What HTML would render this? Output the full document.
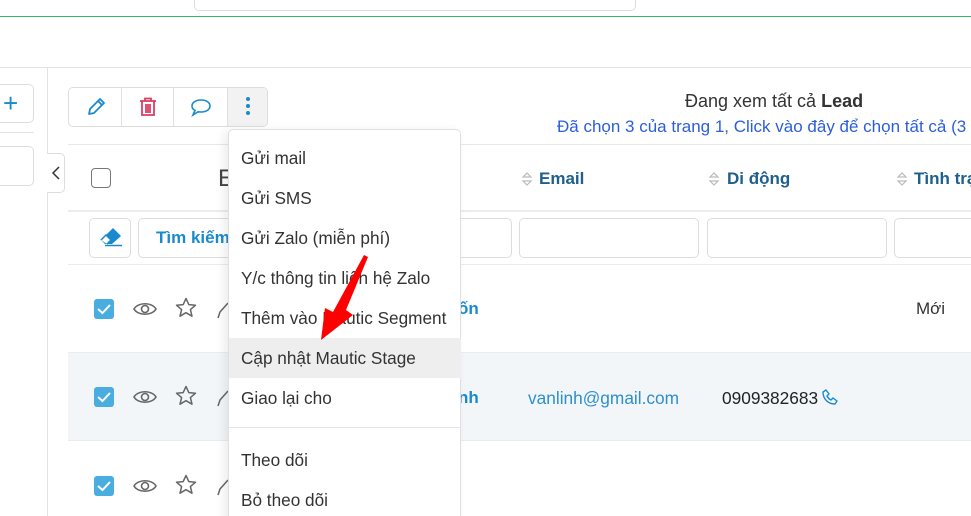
<!DOCTYPE html>
<html><head><meta charset="utf-8"><style>
*{box-sizing:border-box;margin:0;padding:0}
html,body{width:971px;height:516px;overflow:hidden}
body{background:#fff;font-family:"Liberation Sans","DejaVu Sans",sans-serif;position:relative;color:#333}
.a{position:absolute}
.t{position:absolute;white-space:nowrap;font-size:17px;line-height:20px}
.box{position:absolute;border:1px solid #ddd;border-radius:5px;background:#fff}
.mi{position:absolute;left:0;width:232px;height:40px;padding-left:12px;font-size:17.2px;line-height:40px;color:#333;white-space:nowrap}
</style></head><body>
<div class="box" style="left:194px;top:-10px;width:442px;height:21px"></div>
<div class="a" style="left:0;top:16px;width:971px;height:1px;background:#2fba6a"></div>
<div class="a" style="left:0;top:67px;width:971px;height:1px;background:#e3e3e3"></div>
<div class="a" style="left:47px;top:68px;width:1px;height:448px;background:#e3e3e3"></div>
<div class="box" style="left:-10px;top:84px;width:44px;height:39px"></div>
<div class="t" style="left:3px;top:90px;font-size:26px;line-height:26px;color:#1a8ad0">+</div>
<div class="a" style="left:0;top:132px;width:34px;height:1px;background:#e3e3e3"></div>
<div class="box" style="left:-10px;top:146px;width:44px;height:40px"></div>
<div class="box" style="left:47px;top:153px;width:18px;height:40px;border-radius:0 5px 5px 0;border-left:none"></div>
<svg class="a" style="left:50px;top:165px" width="12" height="16"><path d="M9 2 L3 8 L9 14" fill="none" stroke="#333" stroke-width="1.5"/></svg>
<div class="box" style="left:68px;top:87px;width:200px;height:40px"></div>
<div class="a" style="left:228px;top:88px;width:39px;height:38px;background:#f2f2f2;border-radius:0 5px 5px 0"></div>
<div class="a" style="left:121px;top:88px;width:1px;height:38px;background:#e0e0e0"></div>
<div class="a" style="left:173px;top:88px;width:1px;height:38px;background:#e0e0e0"></div>
<div class="a" style="left:227px;top:88px;width:1px;height:38px;background:#e0e0e0"></div>
<svg class="a" style="left:86px;top:97px" width="20" height="20"><path d="M3 17 L4 12 L14 2 L18 6 L8 16 Z M12 4 L16 8" fill="none" stroke="#1a8ad0" stroke-width="1.8" stroke-linejoin="round"/></svg>
<svg class="a" style="left:139px;top:97px" width="18" height="20"><path d="M1 4 H17 M6 4 V1.5 H12 V4 M3 4 V18 H15 V4 M7 7 V16 M9 7 V16 M11 7 V16" fill="none" stroke="#dc3d63" stroke-width="1.8"/></svg>
<svg class="a" style="left:190px;top:98px" width="22" height="19"><path d="M11 2 C5 2 2 5 2 8 C2 10 3 11.5 5 12.5 L3 17 L8 13.8 C9 14 10 14 11 14 C17 14 20 11 20 8 C20 5 17 2 11 2 Z" fill="none" stroke="#1a8ad0" stroke-width="1.6"/></svg>
<div class="a" style="left:246px;top:97px;width:4px;height:4px;border-radius:2px;background:#1a8ad0"></div>
<div class="a" style="left:246px;top:104px;width:4px;height:4px;border-radius:2px;background:#1a8ad0"></div>
<div class="a" style="left:246px;top:111px;width:4px;height:4px;border-radius:2px;background:#1a8ad0"></div>
<div class="t" style="left:685px;top:91px;font-size:18px;color:#333">Đang xem tất cả <b>Lead</b></div>
<div class="t" style="left:557px;top:117px;font-size:17px;color:#2b5fd9">Đã chọn 3 của trang 1, Click vào đây để chọn tất cả (3</div>
<div class="a" style="left:68px;top:144px;width:903px;height:1px;background:#e8e8e8"></div>
<div class="a" style="left:91px;top:168px;width:20px;height:20px;border:1.5px solid #777;border-radius:4px"></div>
<div class="t" style="left:218px;top:166px;font-size:24px;line-height:26px;color:#444">E</div>
<svg class="a" style="left:521px;top:171px" width="12" height="16"><path d="M2 6 L6 2 L10 6 Z M2 10 L6 14 L10 10 Z" fill="none" stroke="#bbb" stroke-width="1.2"/></svg>
<div class="t" style="left:539px;top:169px;font-weight:bold;color:#1f5f8b">Email</div>
<svg class="a" style="left:708px;top:171px" width="12" height="16"><path d="M2 6 L6 2 L10 6 Z M2 10 L6 14 L10 10 Z" fill="none" stroke="#bbb" stroke-width="1.2"/></svg>
<div class="t" style="left:727px;top:169px;font-weight:bold;color:#1f5f8b">Di động</div>
<svg class="a" style="left:896px;top:171px" width="12" height="16"><path d="M2 6 L6 2 L10 6 Z M2 10 L6 14 L10 10 Z" fill="none" stroke="#bbb" stroke-width="1.2"/></svg>
<div class="t" style="left:914px;top:169px;font-weight:bold;color:#1f5f8b">Tình trạ</div>
<div class="a" style="left:68px;top:210px;width:903px;height:2px;background:#ececec"></div>
<div class="box" style="left:89px;top:218px;width:42px;height:40px"></div>
<svg class="a" style="left:99px;top:227px" width="24" height="20"><path d="M14 1 L22 9 L13 17 L6 17 L2 13 Z" fill="#1a8ad0"/><path d="M2 13 L7 8 L12 13 L8 17" fill="#fff" stroke="#1a8ad0" stroke-width="1.5"/><path d="M6 18.5 H23" stroke="#1a8ad0" stroke-width="1.5"/></svg>
<div class="box" style="left:138px;top:218px;width:110px;height:40px"></div>
<div class="t" style="left:156px;top:228px;font-size:17px;font-weight:bold;color:#1a8ad0">Tìm kiếm</div>
<div class="box" style="left:440px;top:218px;width:72px;height:40px"></div>
<div class="box" style="left:519px;top:218px;width:180px;height:40px"></div>
<div class="box" style="left:707px;top:218px;width:180px;height:40px"></div>
<div class="box" style="left:894px;top:218px;width:90px;height:40px"></div>
<div class="a" style="left:68px;top:264px;width:903px;height:1px;background:#ececec"></div>
<div class="a" style="left:68px;top:352px;width:903px;height:89px;background:#f3f6f9;border-top:1px solid #ececec;border-bottom:1px solid #ececec"></div>
<div class="t" style="left:458px;top:299px;font-weight:bold;color:#1a8ad0">ốn</div>
<div class="t" style="left:916px;top:299px;color:#333">Mới</div>
<div class="t" style="left:458px;top:388px;font-weight:bold;color:#1a8ad0">nh</div>
<div class="t" style="left:528px;top:388px;font-size:17.3px;color:#2d8fcf">vanlinh@gmail.com</div>
<div class="t" style="left:722px;top:388px;font-size:17.3px;color:#222">0909382683</div>
<svg class="a" style="left:821px;top:389px" width="17" height="17"><path d="M2 3 L5 1 L8 5 L6 7 C7 9 8 10 10 11 L12 9 L16 12 L14 15 C7 15 2 10 2 3 Z" fill="none" stroke="#1a8ad0" stroke-width="1.4" stroke-linejoin="round"/></svg>
<svg class="a" style="left:94px;top:299px" width="20" height="20"><rect width="20" height="20" rx="3" fill="#4aaddf"/><path d="M4 10 L8.5 14 L16 6" fill="none" stroke="#fff" stroke-width="2"/></svg>
<svg class="a" style="left:94px;top:387px" width="20" height="20"><rect width="20" height="20" rx="3" fill="#4aaddf"/><path d="M4 10 L8.5 14 L16 6" fill="none" stroke="#fff" stroke-width="2"/></svg>
<svg class="a" style="left:94px;top:476px" width="20" height="20"><rect width="20" height="20" rx="3" fill="#4aaddf"/><path d="M4 10 L8.5 14 L16 6" fill="none" stroke="#fff" stroke-width="2"/></svg>
<svg class="a" style="left:133px;top:300px" width="24" height="18"><path d="M1 9 C5 2 19 2 23 9 C19 16 5 16 1 9 Z" fill="none" stroke="#666" stroke-width="1.6"/><circle cx="12" cy="9" r="3.5" fill="none" stroke="#666" stroke-width="1.6"/></svg>
<svg class="a" style="left:133px;top:388px" width="24" height="18"><path d="M1 9 C5 2 19 2 23 9 C19 16 5 16 1 9 Z" fill="none" stroke="#666" stroke-width="1.6"/><circle cx="12" cy="9" r="3.5" fill="none" stroke="#666" stroke-width="1.6"/></svg>
<svg class="a" style="left:133px;top:477px" width="24" height="18"><path d="M1 9 C5 2 19 2 23 9 C19 16 5 16 1 9 Z" fill="none" stroke="#666" stroke-width="1.6"/><circle cx="12" cy="9" r="3.5" fill="none" stroke="#666" stroke-width="1.6"/></svg>
<svg class="a" style="left:175px;top:297px" width="22" height="22"><path d="M11 1.5 L13.8 7.6 L20.5 8.2 L15.4 12.6 L17 19.2 L11 15.7 L5 19.2 L6.6 12.6 L1.5 8.2 L8.2 7.6 Z" fill="none" stroke="#666" stroke-width="1.5" stroke-linejoin="round"/></svg>
<svg class="a" style="left:175px;top:385px" width="22" height="22"><path d="M11 1.5 L13.8 7.6 L20.5 8.2 L15.4 12.6 L17 19.2 L11 15.7 L5 19.2 L6.6 12.6 L1.5 8.2 L8.2 7.6 Z" fill="none" stroke="#666" stroke-width="1.5" stroke-linejoin="round"/></svg>
<svg class="a" style="left:175px;top:474px" width="22" height="22"><path d="M11 1.5 L13.8 7.6 L20.5 8.2 L15.4 12.6 L17 19.2 L11 15.7 L5 19.2 L6.6 12.6 L1.5 8.2 L8.2 7.6 Z" fill="none" stroke="#666" stroke-width="1.5" stroke-linejoin="round"/></svg>
<svg class="a" style="left:216px;top:300px" width="14" height="20"><path d="M2 18 L4 12 L12 3" fill="none" stroke="#666" stroke-width="1.5"/></svg>
<svg class="a" style="left:216px;top:388px" width="14" height="20"><path d="M2 18 L4 12 L12 3" fill="none" stroke="#666" stroke-width="1.5"/></svg>
<svg class="a" style="left:216px;top:477px" width="14" height="20"><path d="M2 18 L4 12 L12 3" fill="none" stroke="#666" stroke-width="1.5"/></svg>
<div class="a" style="left:228px;top:129px;width:233px;height:400px;background:#fff;border:1px solid #e0e0e0;border-radius:5px;box-shadow:-4px 2px 10px rgba(0,0,0,0.08)">
<div class="mi" style="top:8px">Gửi mail</div>
<div class="mi" style="top:48px">Gửi SMS</div>
<div class="mi" style="top:88px">Gửi Zalo (miễn phí)</div>
<div class="mi" style="top:128px">Y/c thông tin liên hệ Zalo</div>
<div class="mi" style="top:168px">Thêm vào Mautic Segment</div>
<div class="mi" style="top:208px;background:#eee">Cập nhật Mautic Stage</div>
<div class="mi" style="top:248px">Giao lại cho</div>
<div class="a" style="left:0;top:297px;width:232px;height:1px;background:#e6e6e6"></div>
<div class="mi" style="top:310px">Theo dõi</div>
<div class="mi" style="top:350px">Bỏ theo dõi</div>
</div>
<svg class="a" style="left:300px;top:250px" width="80" height="100"><path d="M68 7 L46 60 L53 65 L21 90 L25 58 L33 62 L64 5 Z" fill="#f00"/></svg>
</body></html>
